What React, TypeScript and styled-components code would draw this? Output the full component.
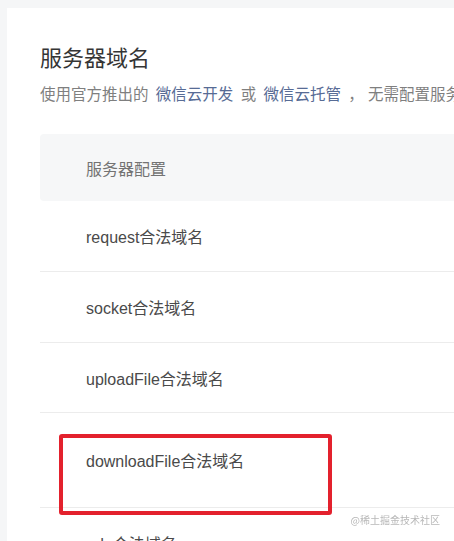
import { createGlobalStyle, styled } from 'styled-components';

const GlobalStyle = createGlobalStyle`
  html, body {
    margin: 0;
    padding: 0;
    background: #f5f6f7;
    overflow: hidden;
  }
  body {
    font-family: "Liberation Sans", "Noto Sans CJK SC", sans-serif;
  }
`;

const rows = [
  { label: 'request合法域名', height: 71 },
  { label: 'socket合法域名', height: 71 },
  { label: 'uploadFile合法域名', height: 70 },
  { label: 'downloadFile合法域名', height: 95, marked: true },
  { label: 'udp合法域名', height: 70 },
];

const App = () => {
  return (
    <>
      <GlobalStyle />
      <Page>
        <Card>
          <Title>服务器域名</Title>
          <Desc>
            使用官方推出的 <Link>微信云开发</Link> 或 <Link>微信云托管</Link> ， 无需配置服务器域名
          </Desc>
          <Table>
            <HeadRow>服务器配置</HeadRow>
            {rows.map((row) => (
              <Row key={row.label} $height={row.height}>
                {row.label}
                {row.marked && <Marker />}
              </Row>
            ))}
          </Table>
        </Card>
      </Page>
      <Watermark>@稀土掘金技术社区</Watermark>
    </>
  );
};

export default App;

const Page = styled.div`
  padding: 8px 0 0 7px;
  width: 1200px;
`;

const Card = styled.div`
  background: #fff;
  padding: 36px 0 40px 33px;
  min-height: 700px;
`;

const Title = styled.h2`
  margin: 0;
  font-size: 22px;
  line-height: 30px;
  font-weight: 400;
  color: #353535;
`;

const Desc = styled.p`
  margin: 10px 0 0;
  font-size: 15.5px;
  line-height: 22px;
  color: #7f7f7f;
  white-space: nowrap;
`;

const Link = styled.a`
  color: #576b95;
  margin: 0 3px;
  cursor: pointer;
`;

const Table = styled.div`
  margin-top: 28px;
  display: flex;
  flex-direction: column;
`;

const HeadRow = styled.div`
  height: 67px;
  display: flex;
  align-items: center;
  padding-left: 46px;
  background: #f6f7f8;
  border-radius: 4px;
  font-size: 16px;
  color: #737373;
`;

const Row = styled.div<{ $height: number }>`
  position: relative;
  height: ${(p) => p.$height}px;
  box-sizing: border-box;
  display: flex;
  align-items: center;
  padding-left: 46px;
  border-bottom: 1px solid #ececec;
  font-size: 16px;
  color: #4a4a4a;
`;

const Marker = styled.span`
  position: absolute;
  left: 19px;
  top: 21px;
  width: 273px;
  height: 81px;
  box-sizing: border-box;
  border: 4px solid #e3212d;
  border-radius: 3px;
  pointer-events: none;
`;

const Watermark = styled.div`
  position: fixed;
  right: 14px;
  bottom: 14px;
  font-size: 10px;
  color: #b8b8b8;
  font-family: "Noto Sans CJK SC", sans-serif;
`;
